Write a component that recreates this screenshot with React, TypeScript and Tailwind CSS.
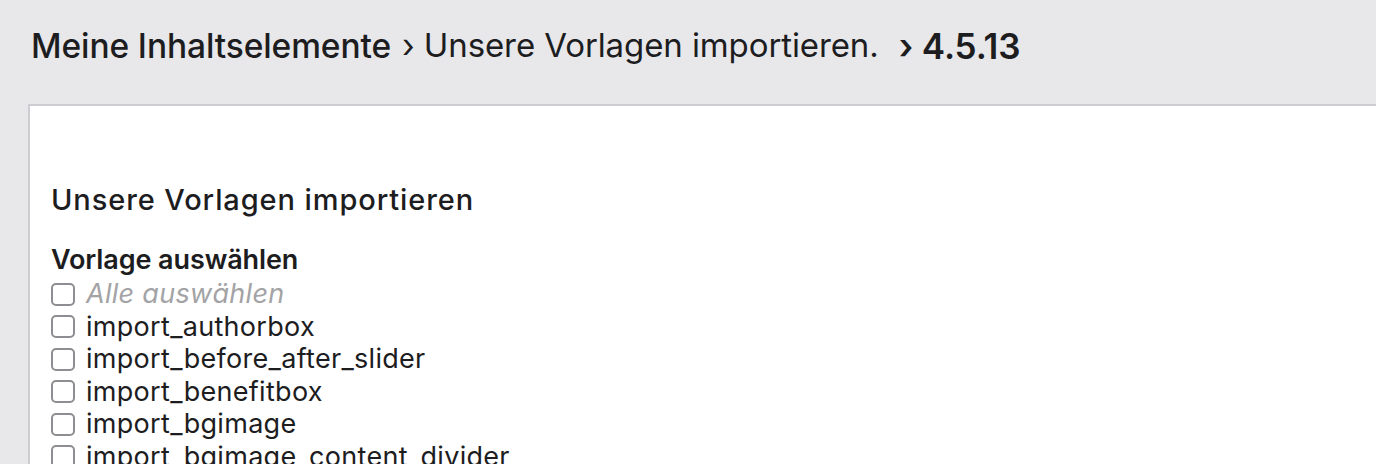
import React from "react";

const items = [
  "import_authorbox",
  "import_before_after_slider",
  "import_benefitbox",
  "import_bgimage",
  "import_bgimage_content_divider",
];

function Box() {
  return (
    <span className="inline-block w-[24px] h-[23px] shrink-0 rounded-[5px] border-2 border-[#8e8e92] bg-white" />
  );
}

export default function App() {
  return (
    <div
      className="h-[464px] w-[1376px] overflow-hidden bg-[#e8e8eb] text-[#1d1d1f]"
      style={{ fontFamily: "Inter, 'Noto Sans', sans-serif" }}
    >
      <div className="flex h-[104px] items-center pl-[31px] pb-[12px] tracking-[-0.1px]">
        <span className="text-[33.5px] font-medium">Meine Inhaltselemente</span>
        <span className="ml-[11px] text-[33px] font-normal">› Unsere Vorlagen importieren.</span>
        <span className="ml-[20px] font-semibold text-[35px]">› 4.5.13</span>
      </div>
      <div className="ml-[28px] h-[400px] border-l-2 border-t-2 border-[#cdcdd1] bg-white pl-[21px] pt-[76px]">
        <h2 className="text-[29px] font-medium leading-[36px] tracking-[0.9px]">Unsere Vorlagen importieren</h2>
        <div className="mt-[26px] text-[27px] font-semibold leading-[32px] tracking-[-0.1px]">Vorlage auswählen</div>
        <div className="mt-[2px] flex flex-col text-[27px] leading-[32.5px] tracking-[0.3px]">
          <label className="flex items-center gap-[11px]">
            <Box />
            <span className="italic text-[#a3a3a6]">Alle auswählen</span>
          </label>
          {items.map((it) => (
            <label key={it} className="flex items-center gap-[11px]">
              <Box />
              <span>{it}</span>
            </label>
          ))}
        </div>
      </div>
    </div>
  );
}
